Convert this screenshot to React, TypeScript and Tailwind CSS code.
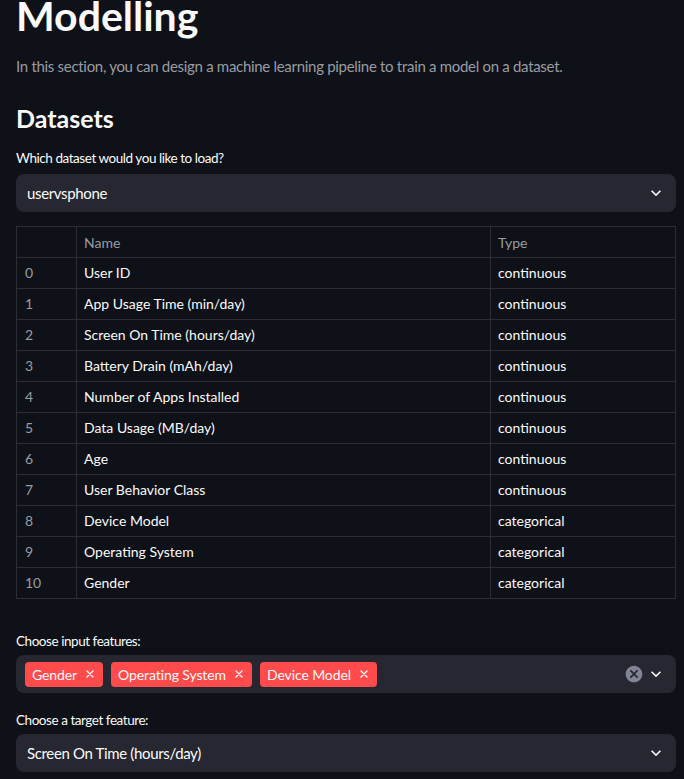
import React from "react";

const FONT = { fontFamily: 'Lato, "Open Sans", sans-serif' };

function Chevron() {
  return (
    <svg width="20" height="20" viewBox="0 0 24 24" fill="#fafafa">
      <path d="M7.41 8.59 12 13.17l4.59-4.58L18 10l-6 6-6-6 1.41-1.41z" />
    </svg>
  );
}

function ClearIcon() {
  return (
    <svg width="20" height="20" viewBox="0 0 24 24" fill="#808495">
      <path d="M12 2C6.47 2 2 6.47 2 12s4.47 10 10 10 10-4.47 10-10S17.53 2 12 2zm5 13.59L15.59 17 12 13.41 8.41 17 7 15.59 10.59 12 7 8.41 8.41 7 12 10.59 15.59 7 17 8.41 13.41 12 17 15.59z" />
    </svg>
  );
}

function TagX() {
  return (
    <svg width="8" height="8" viewBox="0 0 8 8" stroke="#fafafa" strokeWidth="1.4" strokeLinecap="round">
      <path d="M1 1l6 6M7 1L1 7" />
    </svg>
  );
}

function Label({ children }: { children: React.ReactNode }) {
  return (
    <div className="h-[20px] leading-[20px] text-[13.5px] tracking-[-0.45px] text-[#fafafa]">{children}</div>
  );
}

function Select({ value }: { value: string }) {
  return (
    <div className="h-[38px] rounded-[8px] bg-[#262730] flex items-center pl-[11px] pr-[10px]">
      <span className="flex-1 text-[15px] tracking-[-0.35px] text-[#fafafa]">{value}</span>
      <Chevron />
    </div>
  );
}

const rows: [string, string][] = [
  ["User ID", "continuous"],
  ["App Usage Time (min/day)", "continuous"],
  ["Screen On Time (hours/day)", "continuous"],
  ["Battery Drain (mAh/day)", "continuous"],
  ["Number of Apps Installed", "continuous"],
  ["Data Usage (MB/day)", "continuous"],
  ["Age", "continuous"],
  ["User Behavior Class", "continuous"],
  ["Device Model", "categorical"],
  ["Operating System", "categorical"],
  ["Gender", "categorical"],
];

export default function App() {
  return (
    <div className="min-h-[779px] w-full bg-[#0e1117] overflow-hidden" style={FONT}>
      <div className="pl-4 pr-2">
        <h1 className="-mt-[9px] h-[50px] leading-[50px] text-[41px] font-bold text-[#fafafa]">Modelling</h1>
        <p className="mt-[13px] h-[24px] leading-[24px] text-[15px] tracking-[-0.3px] text-[#9a9ca3]">
          In this section, you can design a machine learning pipeline to train a model on a dataset.
        </p>
        <h2 className="mt-[22px] h-[36px] leading-[36px] text-[25px] font-bold text-[#fafafa]">Datasets</h2>
        <div className="mt-[12px]">
          <Label>Which dataset would you like to load?</Label>
        </div>
        <div className="mt-[6px]">
          <Select value="uservsphone" />
        </div>
        <table className="mt-[14px] w-full border-collapse text-[14px]">
          <thead>
            <tr className="h-[31px]">
              <th className="w-[60px] border border-[#2c2e35]"></th>
              <th className="border border-[#2c2e35] text-left font-normal pl-[7px] text-[#999ca2]">Name</th>
              <th className="w-[185px] border border-[#2c2e35] text-left font-normal pl-[7px] text-[#999ca2]">Type</th>
            </tr>
          </thead>
          <tbody>
            {rows.map(([n, t], i) => (
              <tr key={i} className="h-[31px]">
                <td className="border border-[#2c2e35] pl-[8px] pb-[1px] text-[#999ca2]">{i}</td>
                <td className="border border-[#2c2e35] pl-[7px] pb-[1px] text-[#fafafa]">{n}</td>
                <td className="border border-[#2c2e35] pl-[7px] pb-[1px] text-[#fafafa]">{t}</td>
              </tr>
            ))}
          </tbody>
        </table>
        <div className="mt-[32px]">
          <Label>Choose input features:</Label>
        </div>
        <div className="mt-[4px] h-[38px] rounded-[8px] bg-[#262730] flex items-center pl-[9px] pr-[10px]">
          <div className="flex-1 flex items-center gap-[8px]">
            {["Gender", "Operating System", "Device Model"].map((t) => (
              <div key={t} className="h-[25px] rounded-[4px] bg-[#ff4b4b] flex items-center pl-[7px] pr-[9px] gap-[9px]">
                <span className="text-[14px] tracking-[-0.1px] text-[#fafafa]">{t}</span>
                <TagX />
              </div>
            ))}
          </div>
          <div className="flex items-center gap-[2px]">
            <ClearIcon />
            <Chevron />
          </div>
        </div>
        <div className="mt-[17px]">
          <Label>Choose a target feature:</Label>
        </div>
        <div className="mt-[4px]">
          <Select value="Screen On Time (hours/day)" />
        </div>
      </div>
    </div>
  );
}
